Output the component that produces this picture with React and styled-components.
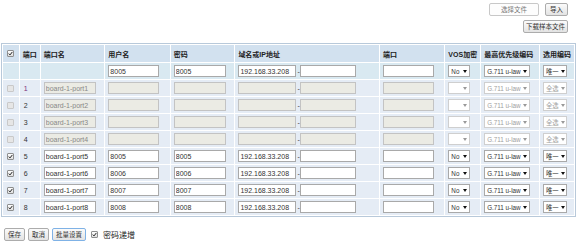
import React from "react";
import styled, { createGlobalStyle } from "styled-components";

const GlobalStyle = createGlobalStyle`
  body {
    margin: 0;
    background: #fff;
    font-family: "Liberation Sans", "Noto Sans CJK SC", sans-serif;
    font-size: 7px;
    color: #333;
  }
`;

const COLS = [16, 17, 64, 65, 64, 145, 65, 32, 58, 33];
const HEADS = ["", "端口", "端口名", "用户名", "密码", "域名或IP地址", "端口", "VOS加密", "最高优先级编码", "选用编码"];

const ROWS = [
  { id: 1, on: false },
  { id: 2, on: false },
  { id: 3, on: false },
  { id: 4, on: false },
  { id: 5, on: true, user: "8005" },
  { id: 6, on: true, user: "8006" },
  { id: 7, on: true, user: "8007" },
  { id: 8, on: true, user: "8008" },
];

function Check({ checked, disabled }) {
  return (
    <CheckBox $disabled={disabled}>
      {checked && (
        <svg width="5" height="5" viewBox="0 0 10 10">
          <path d="M1.5 5.2 L4 7.8 L8.8 1.8" fill="none" stroke="#222" strokeWidth="2" />
        </svg>
      )}
    </CheckBox>
  );
}

function Select({ w, value, disabled }) {
  return (
    <SelectBox $w={w} $disabled={disabled}>
      <span>{value}</span>
      <Arrow $disabled={disabled} />
    </SelectBox>
  );
}

function App() {
  return (
    <Page>
      <GlobalStyle />
      <Toolbar>
        <ToolRow>
          <FileButton>选择文件</FileButton>
          <Button $wide>导入</Button>
        </ToolRow>
        <ToolRow>
          <Button $narrow>下载样本文件</Button>
        </ToolRow>
      </Toolbar>

      <Table>
        <colgroup>
          {COLS.map((w, i) => (
            <Col key={i} $w={w} />
          ))}
        </colgroup>
        <thead>
          <tr>
            {HEADS.map((h, i) => (
              <Th key={i} $center={i === 0}>
                {i === 0 ? <Check checked /> : h}
              </Th>
            ))}
          </tr>
        </thead>
        <tbody>
          <tr>
            <Td $bg="#d9e9f1" />
            <Td $bg="#d9e9f1" />
            <Td $bg="#d9e9f1" />
            <Td $bg="#d9e9f1">
              <Input defaultValue="8005" $w={51} />
            </Td>
            <Td $bg="#d9e9f1">
              <Input defaultValue="8005" />
            </Td>
            <Td $bg="#d9e9f1">
              <IpPair>
                <Input defaultValue="192.168.33.208" $w={58} />
                <span>-</span>
                <Input $w={56} />
              </IpPair>
            </Td>
            <Td $bg="#d9e9f1">
              <Input $w={51} />
            </Td>
            <Td $bg="#d9e9f1">
              <Select w={22} value="No" />
            </Td>
            <Td $bg="#d9e9f1">
              <Select w={46} value="G.711 u-law" />
            </Td>
            <Td $bg="#d9e9f1">
              <Select w={24} value="唯一" />
            </Td>
          </tr>
          {ROWS.map((r) => (
            <tr key={r.id}>
              <Td $center>
                <Check checked={r.on} disabled={!r.on} />
              </Td>
              <Td>
                <PortNo $first={r.id === 1}>{r.id}</PortNo>
              </Td>
              <Td>
                <Input defaultValue={`board-1-port${r.id}`} disabled={!r.on} />
              </Td>
              <Td>
                <Input defaultValue={r.user || ""} disabled={!r.on} $w={51} />
              </Td>
              <Td>
                <Input defaultValue={r.user || ""} disabled={!r.on} />
              </Td>
              <Td>
                <IpPair>
                  <Input defaultValue={r.on ? "192.168.33.208" : ""} disabled={!r.on} $w={58} />
                  <span>-</span>
                  <Input disabled={!r.on} $w={56} />
                </IpPair>
              </Td>
              <Td>
                <Input disabled={!r.on} $w={51} />
              </Td>
              <Td>
                <Select w={22} value={r.on ? "No" : ""} disabled={!r.on} />
              </Td>
              <Td>
                <Select w={46} value="G.711 u-law" disabled={!r.on} />
              </Td>
              <Td>
                <Select w={24} value={r.on ? "唯一" : "全选"} disabled={!r.on} />
              </Td>
            </tr>
          ))}
        </tbody>
      </Table>

      <Footer>
        <Button>保存</Button>
        <Button>取消</Button>
        <Button $focus>批量设置</Button>
        <Check checked />
        <Label>密码递增</Label>
      </Footer>
    </Page>
  );
}

const Page = styled.div`
  width: 576px;
  padding: 0 0 0 1px;
  box-sizing: border-box;
`;
const Toolbar = styled.div`
  display: flex;
  flex-direction: column;
  align-items: flex-end;
  gap: 4px;
  padding: 3px 8px 0 0;
`;
const ToolRow = styled.div`
  display: flex;
  gap: 6px;
`;
const Button = styled.button`
  height: 13px;
  padding: 0 ${(p) => (p.$wide ? 4 : p.$narrow ? 2 : 3)}px;
  box-sizing: border-box;
  font-family: inherit;
  font-size: 6.5px;
  line-height: 11px;
  color: #333;
  background: linear-gradient(#fbfbfb, #e3e3e3);
  border: 1px solid ${(p) => (p.$focus ? "#7fb2e6" : "#acacac")};
  border-radius: 2px;
  cursor: pointer;
`;
const FileButton = styled(Button)`
  width: 50px;
  color: #777;
  background: #fdfdfd;
  border-color: #c8c8c8;
`;
const Table = styled.table`
  margin-top: 10px;
  table-layout: fixed;
  border-collapse: separate;
  border-spacing: 1px;
  border: 1px solid #b8c9da;
  background: #fff;
`;
const Col = styled.col`
  width: ${(p) => p.$w}px;
`;
const Th = styled.th`
  height: 17px;
  padding: 0 3px;
  background: #d2e1ef;
  font-weight: bold;
  font-size: 7px;
  color: #222;
  text-align: ${(p) => (p.$center ? "center" : "left")};
  white-space: nowrap;
`;
const Td = styled.td`
  height: 16px;
  padding: 0 3px;
  background: ${(p) => p.$bg || "#e5ecf5"};
  text-align: ${(p) => (p.$center ? "center" : "left")};
  vertical-align: middle;
`;
const PortNo = styled.span`
  padding-left: 1px;
  color: ${(p) => (p.$first ? "#7b2f7b" : "#333")};
`;
const Input = styled.input`
  display: block;
  width: ${(p) => p.$w || 52}px;
  height: 12px;
  box-sizing: border-box;
  margin: 0;
  padding: 0 1px;
  font-family: inherit;
  font-size: 7px;
  color: #333;
  background: #fff;
  border: 1px solid #a9a9a9;
  border-radius: 0;
  &:disabled {
    background: #ebebe4;
    border-color: #c3c3c3;
    color: #888;
  }
`;
const IpPair = styled.div`
  display: flex;
  align-items: center;
  gap: 1px;
  span {
    width: 2px;
    color: #333;
  }
`;
const SelectBox = styled.span`
  display: flex;
  align-items: center;
  justify-content: space-between;
  gap: 2px;
  width: ${(p) => p.$w}px;
  height: 12px;
  box-sizing: border-box;
  padding: 0 2px 0 2px;
  background: #fff;
  border: 1px solid ${(p) => (p.$disabled ? "#cfcfcf" : "#a9a9a9")};
  color: ${(p) => (p.$disabled ? "#a0a0a0" : "#333")};
  white-space: nowrap;
  overflow: hidden;
  font-size: 6.3px;
`;
const Arrow = styled.i`
  flex: none;
  width: 0;
  height: 0;
  border-left: 2px solid transparent;
  border-right: 2px solid transparent;
  border-top: 3px solid ${(p) => (p.$disabled ? "#999" : "#111")};
`;
const CheckBox = styled.span`
  display: inline-flex;
  align-items: center;
  justify-content: center;
  width: 7px;
  height: 7px;
  box-sizing: border-box;
  vertical-align: middle;
  border: 1px solid ${(p) => (p.$disabled ? "#c9c9c9" : "#8e8f8f")};
  background: ${(p) => (p.$disabled ? "#e6e6e6" : "linear-gradient(#fff, #dedede)")};
  border-radius: 1px;
`;
const Footer = styled.div`
  display: flex;
  align-items: center;
  gap: 3px;
  margin-top: 11px;
  padding-left: 3px;
  ${CheckBox} {
    margin-left: 2px;
  }
`;
const Label = styled.span`
  font-size: 8px;
  color: #222;
  margin-left: 2px;
`;

export default App;
